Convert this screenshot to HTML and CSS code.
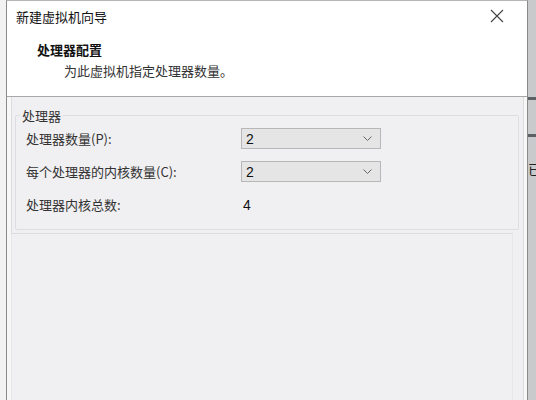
FILE: index.html
```html
<!DOCTYPE html>
<html lang="zh-CN">
<head>
    <meta charset="UTF-8">
    <title>新建虚拟机向导</title>
    <link rel="stylesheet" href="styles.css">
</head>
<body>
    <div class="page">
        <div class="window">
            <div class="header">
                <div class="titlebar">
                    <span class="title">新建虚拟机向导</span>
                    <svg class="close" width="14" height="14" viewBox="0 0 14 14">
                        <path d="M1 1 L13 13 M13 1 L1 13" stroke="#444" stroke-width="1.1" fill="none"/>
                    </svg>
                </div>
                <div class="heading">处理器配置</div>
                <div class="subtitle">为此虚拟机指定处理器数量。</div>
            </div>

            <div class="content">
                <fieldset class="group">
                    <legend>处理器</legend>
                    <div class="row">
                        <span class="label">处理器数量(P):</span>
                        <div class="select"><span>2</span>
                            <svg width="9" height="5" viewBox="0 0 9 5"><path d="M0.5 0.5 L4.5 4.5 L8.5 0.5" stroke="#666" fill="none"/></svg>
                        </div>
                    </div>
                    <div class="row">
                        <span class="label">每个处理器的内核数量(C):</span>
                        <div class="select"><span>2</span>
                            <svg width="9" height="5" viewBox="0 0 9 5"><path d="M0.5 0.5 L4.5 4.5 L8.5 0.5" stroke="#666" fill="none"/></svg>
                        </div>
                    </div>
                    <div class="row">
                        <span class="label">处理器内核总数:</span>
                        <span class="value">4</span>
                    </div>
                </fieldset>
                <div class="panel"></div>
            </div>
        </div>
        <div class="outside">
            <div class="band"></div>
            <div class="band second"></div>
            <span class="peek">已</span>
        </div>
    </div>
</body>
</html>
```

FILE: styles.css
```css
body {
    margin: 0;
    background: #f2f2f2;
    font-family: "Noto Sans CJK SC", "Liberation Sans", sans-serif;
    font-size: 13px;
    color: #222;
}
.page {
    display: flex;
    height: 400px;
    padding-left: 6px;
    overflow: hidden;
}
.window {
    width: 520px;
    display: flex;
    flex-direction: column;
    background: #f0eff1;
    border-left: 1px solid #8a8a8a;
    border-right: 1px solid #8a8a8a;
    border-top: 1px solid #b5b5b5;
    box-shadow: inset 4px 0 0 #f7f7f7, inset 5px 0 0 #dcdcdc, inset -3px 0 0 #f7f7f7, inset -4px 0 0 #dcdcdc;
}
.header {
    background: #fff;
    height: 95px;
    border-bottom: 1px solid #a8a8a8;
}
.titlebar {
    display: flex;
    justify-content: space-between;
    align-items: center;
    height: 30px;
    padding: 0 23px 0 9px;
}
.title { font-size: 13px; color: #111; }
.heading {
    margin: 9px 0 0 30px;
    font-weight: bold;
    color: #111;
    line-height: 20px;
}
.subtitle {
    margin: 2px 0 0 57px;
    color: #333;
    line-height: 18px;
}
.content {
    flex: 1;
    display: flex;
    flex-direction: column;
    padding: 0 8px;
}
.group {
    margin: 9px 0 0;
    padding: 0 0 6px 10px;
    height: 116px;
    border: 1px solid #dedde0;
    border-radius: 2px;
}
.group legend {
    padding: 0 2px;
    margin-left: -6px;
    color: #333;
}
.row {
    display: flex;
    align-items: center;
    height: 33px;
}
.row:first-of-type { margin-top: -3px; }
.label {
    width: 215px;
    color: #333;
}
.select {
    width: 140px;
    height: 21px;
    box-sizing: border-box;
    display: flex;
    align-items: center;
    justify-content: space-between;
    padding: 0 8px 0 4px;
    background: #e5e5e5;
    border: 1px solid #b7b7b7;
    color: #111;
    font-family: "Liberation Sans", sans-serif;
    font-size: 14px;
}
.value {
    padding-left: 2px;
    font-family: "Liberation Sans", sans-serif;
    font-size: 14px;
    color: #111;
}
.panel {
    flex: 1;
    margin: 3px 6px 0 -4px;
    border-top: 1px solid #dcdcdc;
    border-left: 1px solid #e6e6e6;
    border-right: 1px solid #e6e6e6;
}
.outside {
    flex: 1;
    position: relative;
    overflow: hidden;
    background: #c9cacc;
}
.band {
    height: 3px;
    margin-top: 97px;
    background: #5c6166;
}
.band.second { margin-top: 34px; }
.peek {
    position: absolute;
    left: 0;
    top: 161px;
    font-size: 14px;
    line-height: 16px;
    color: #222;
}
```
